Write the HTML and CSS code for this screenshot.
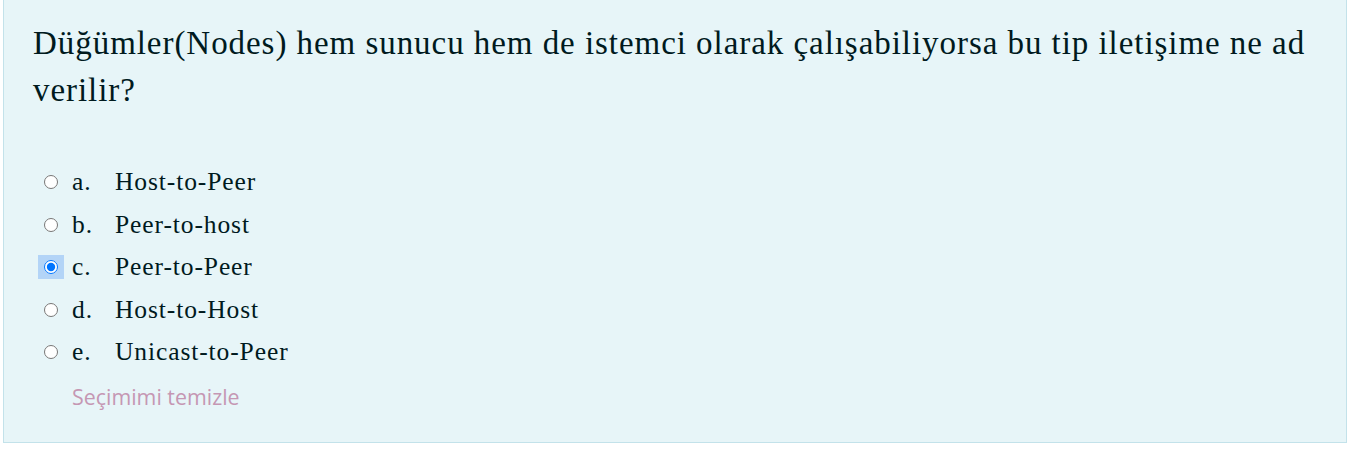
FILE: index.html
```
<!DOCTYPE html>
<html lang="tr">
<head>
<meta charset="utf-8">
<link rel="stylesheet" href="styles.css">
</head>
<body>
<div class="formulation">
  <div class="qtext">Düğümler(Nodes) hem sunucu hem de istemci olarak çalışabiliyorsa bu tip iletişime ne ad verilir?</div>
  <div class="answer">
    <div class="opt"><span class="radio-wrap"><input type="radio" name="q"></span><span class="letter">a.</span><span class="label">Host-to-Peer</span></div>
    <div class="opt"><span class="radio-wrap"><input type="radio" name="q"></span><span class="letter">b.</span><span class="label">Peer-to-host</span></div>
    <div class="opt"><span class="radio-wrap focus"><input type="radio" name="q" checked></span><span class="letter">c.</span><span class="label">Peer-to-Peer</span></div>
    <div class="opt"><span class="radio-wrap"><input type="radio" name="q"></span><span class="letter">d.</span><span class="label">Host-to-Host</span></div>
    <div class="opt"><span class="radio-wrap"><input type="radio" name="q"></span><span class="letter">e.</span><span class="label">Unicast-to-Peer</span></div>
  </div>
  <div class="clear">Seçimimi temizle</div>
</div>
</body>
</html>
```
FILE: styles.css
```
html, body { margin: 0; padding: 0; background: #fff; }
body { padding-left: 3px; }
.formulation {
  width: 1344px;
  margin-top: -1px;
  height: 444px;
  box-sizing: border-box;
  background: #e7f5f8;
  border: 1px solid #c3e2ea;
  color: #001a1e;
  padding: 20px 29px 0 29px;
  font-family: "Liberation Serif", serif;
}
.qtext {
  font-size: 33px;
  letter-spacing: 0.95px;
  line-height: 47px;
}
.answer { margin-top: 47px; }
.opt {
  display: flex;
  align-items: center;
  height: 42.5px;
  font-size: 25.5px;
  letter-spacing: 0.9px;
}
.radio-wrap {
  width: 26px;
  height: 24px;
  display: flex;
  align-items: center;
  justify-content: center;
  margin-left: 5px;
  margin-right: 8px;
}
.radio-wrap.focus { background: #b3d4f7; }
.radio-wrap input { margin: 0; width: 14px; height: 14px; }
.letter { width: 43px; }
.clear {
  margin-left: 39px;
  margin-top: 8px;
  font-family: "Open Sans", sans-serif;
  font-size: 21.4px;
  color: #c597b3;
}
```
